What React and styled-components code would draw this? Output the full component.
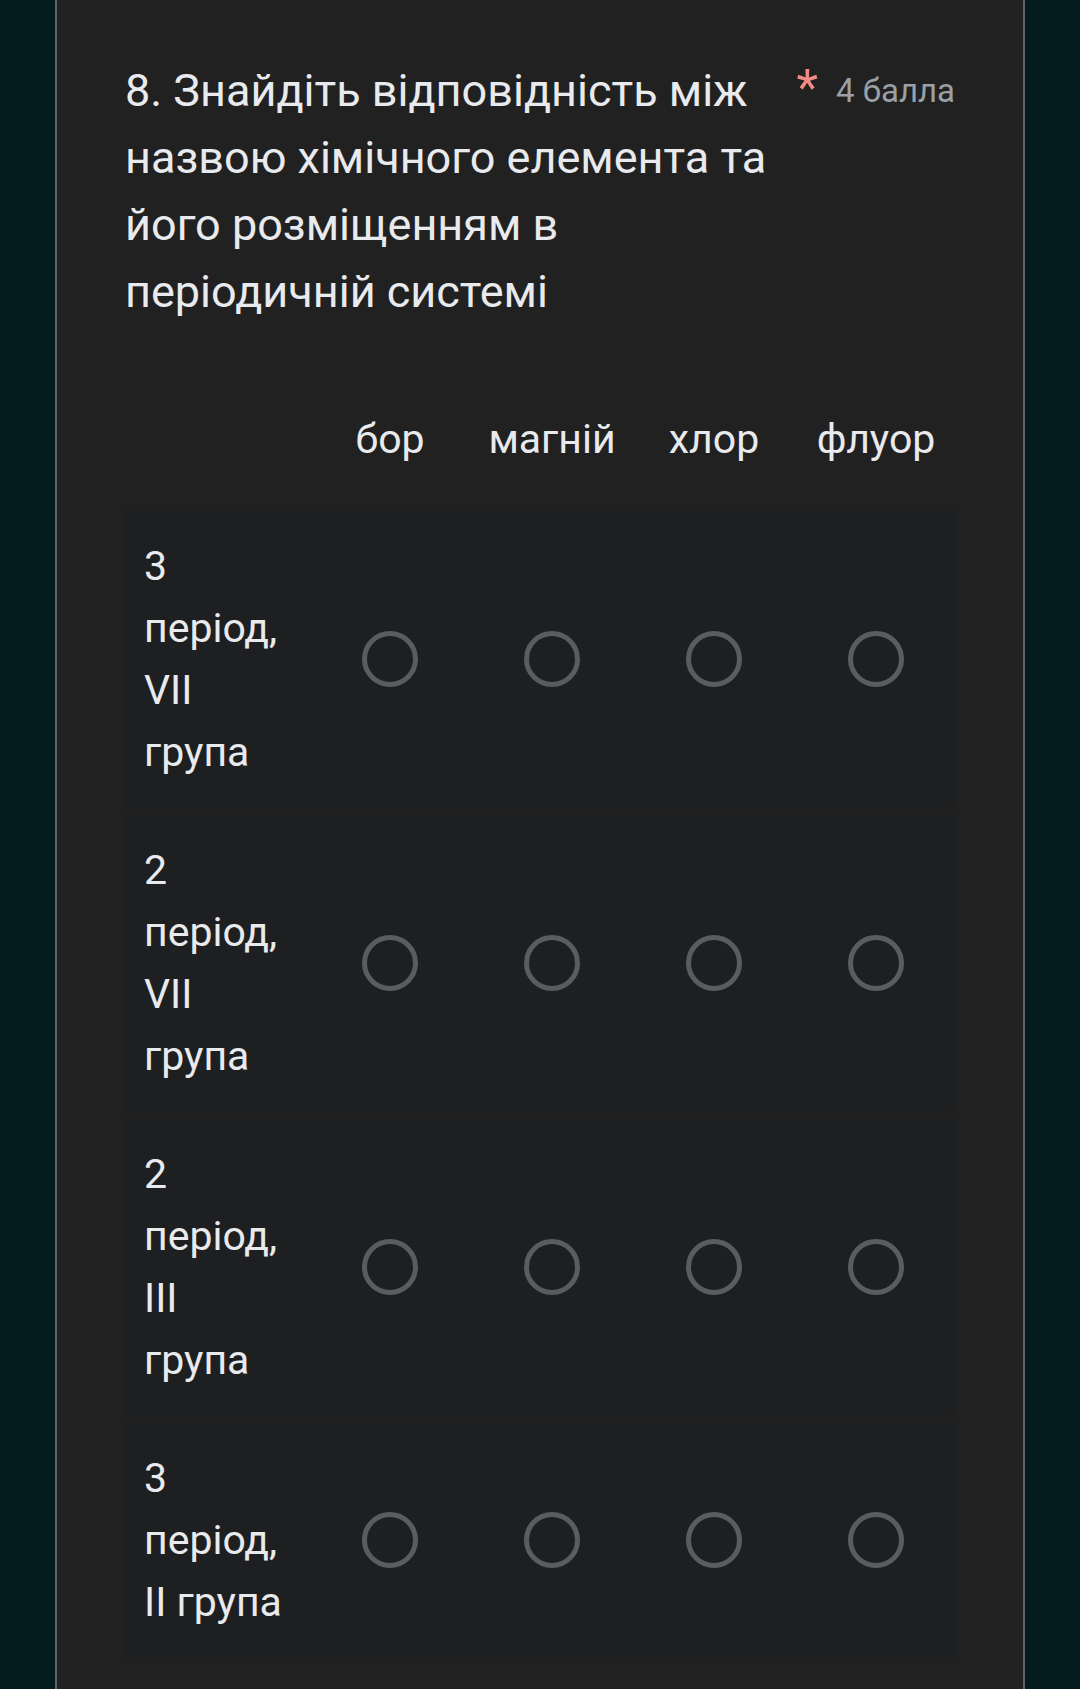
import styled, { createGlobalStyle } from "styled-components";

const GlobalStyle = createGlobalStyle`
  html, body {
    margin: 0;
    padding: 0;
    background: #031a1f;
  }
  body {
    font-family: Roboto, "Liberation Sans", sans-serif;
  }
`;

const columns = ["бор", "магній", "хлор", "флуор"];
const rows = [
  "3 період, VII група",
  "2 період, VII група",
  "2 період, III група",
  "3 період, II група",
];

const App = () => {
  return (
    <>
      <GlobalStyle />
      <Page>
        <Card>
          <Header>
            <Title>
              8. Знайдіть відповідність між назвою хімічного елемента та його
              розміщенням в періодичній системі
            </Title>
            <Required>*</Required>
            <Points>4 балла</Points>
          </Header>
          <Grid>
            <HeadRow>
              <Corner />
              {columns.map((c) => (
                <ColHead key={c}>{c}</ColHead>
              ))}
            </HeadRow>
            {rows.map((r) => (
              <Row key={r}>
                <RowLabel>{r}</RowLabel>
                {columns.map((c) => (
                  <Cell key={c}>
                    <Radio />
                  </Cell>
                ))}
              </Row>
            ))}
          </Grid>
        </Card>
      </Page>
    </>
  );
};

export default App;

const Page = styled.div`
  min-height: 1689px;
  padding: 0 55px;
  box-sizing: border-box;
`;

const Card = styled.div`
  background: #212121;
  border-left: 2px solid #60656a;
  border-right: 2px solid #60656a;
  min-height: 1689px;
  box-sizing: border-box;
  padding: 57px 68px 0 68px;
  color: #e8eaed;
`;

const Header = styled.div`
  display: flex;
  align-items: flex-start;
`;

const Title = styled.div`
  width: 662px;
  font-size: 45px;
  line-height: 67px;
`;

const Required = styled.span`
  color: #f28b82;
  font-size: 50px;
  line-height: 67px;
  margin-left: auto;
  margin-right: 18px;
  margin-top: -2px;
`;

const Points = styled.span`
  color: #9aa0a6;
  font-size: 33px;
  line-height: 67px;
  white-space: nowrap;
`;

const Grid = styled.div`
  margin: 83px -2px 0 -3px;
  font-size: 41px;
  line-height: 62px;
`;

const HeadRow = styled.div`
  display: grid;
  grid-template-columns: 187px repeat(4, 1fr);
  margin-bottom: 41px;
`;

const Corner = styled.div``;

const ColHead = styled.div`
  text-align: center;
`;

const Row = styled.div`
  display: grid;
  grid-template-columns: 187px repeat(4, 1fr);
  background: #1e1f21;
  padding: 24px 0;
  margin-bottom: 8px;
`;

const RowLabel = styled.div`
  padding: 0 23px 0 22px;
`;

const Cell = styled.div`
  display: flex;
  align-items: center;
  justify-content: center;
`;

const Radio = styled.span`
  width: 46px;
  height: 46px;
  border-radius: 50%;
  border: 5px solid #5b5c60;
`;
